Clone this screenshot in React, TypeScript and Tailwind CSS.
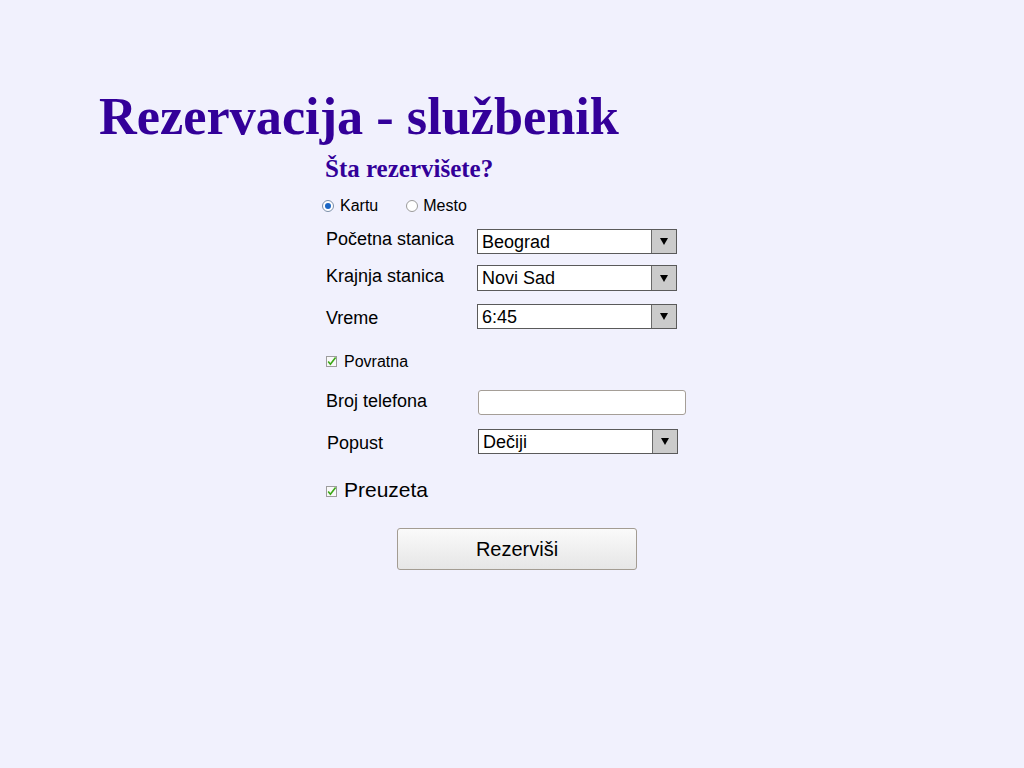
import React from 'react';

const sans = { fontFamily: '"Liberation Sans", Arial, sans-serif' };

function Radio({ checked }: { checked?: boolean }) {
  return (
    <svg width="12" height="12" viewBox="0 0 12 12" className="shrink-0">
      <circle cx="6" cy="6" r="5.5" fill="#ffffff" stroke={checked ? '#7a8ea8' : '#9a9a9a'} />
      {checked && <circle cx="6" cy="6" r="3" fill="#1c66c4" />}
    </svg>
  );
}

function Check() {
  return (
    <svg width="11" height="11" viewBox="0 0 11 11" className="shrink-0">
      <rect x="0.5" y="0.5" width="10" height="10" fill="#f8f8f8" stroke="#9c9c9c" />
      <path d="M2.2 5.6 L4.4 8.2 L9.6 1.6" fill="none" stroke="#3aa815" strokeWidth="1.6" />
    </svg>
  );
}

function Select({ value, h = 'h-[25px]' }: { value: string; h?: string }) {
  return (
    <div className={`flex w-[200px] ${h} border border-[#5a5a5a] bg-white`}>
      <div className="flex-1 flex items-center pl-[4px] text-[18px] leading-[22px] text-black">{value}</div>
      <div className="w-[25px] flex items-center justify-center bg-[#cbcbcb] border-l border-[#6a6a6a]">
        <svg width="8" height="7" viewBox="0 0 8 7">
          <path d="M0 0 L8 0 L4 7 Z" fill="#000" />
        </svg>
      </div>
    </div>
  );
}

export default function App() {
  return (
    <div className="min-h-[768px] w-full bg-[#f1f1fd] overflow-hidden">
      <h1
        className="ml-[99px] pt-[90px] text-[52.3px] leading-none font-bold text-[#330099]"
        style={{ fontFamily: '"Liberation Serif", "Times New Roman", serif' }}
      >
        Rezervacija - službenik
      </h1>

      <h2
        className="ml-[325px] mt-[14px] text-[25px] leading-none font-bold text-[#330099]"
        style={{ fontFamily: '"Liberation Serif", "Times New Roman", serif' }}
      >
        Šta rezervišete?
      </h2>

      <div className="ml-[322px] mt-[15px] text-black" style={sans}>
        {/* radios */}
        <div className="flex items-center h-[20px] text-[16px] leading-[20px]">
          <Radio checked />
          <span className="ml-[6px]">Kartu</span>
          <span className="ml-[28px]"><Radio /></span>
          <span className="ml-[5px]">Mesto</span>
        </div>

        {/* Početna */}
        <div className="flex items-start mt-[13px]">
          <div className="w-[155px] pl-[4px] -mt-px text-[18px] leading-[22px]">Početna stanica</div>
          <Select value="Beograd" />
        </div>

        {/* Krajnja */}
        <div className="flex items-start mt-[11px]">
          <div className="w-[155px] pl-[4px] text-[18px] leading-[22px]">Krajnja stanica</div>
          <Select value="Novi Sad" h="h-[26px]" />
        </div>

        {/* Vreme */}
        <div className="flex items-start mt-[13px]">
          <div className="w-[155px] pl-[4px] mt-[3px] text-[18px] leading-[22px]">Vreme</div>
          <Select value="6:45" />
        </div>

        {/* Povratna */}
        <div className="flex items-baseline mt-[23px] pl-[4px] h-[20px] text-[16px] leading-[20px]">
          <Check />
          <span className="ml-[7px]">Povratna</span>
        </div>

        {/* Broj telefona */}
        <div className="flex items-start mt-[18px]">
          <div className="w-[156px] pl-[4px] text-[18px] leading-[22px]">Broj telefona</div>
          <div className="w-[208px] h-[25px] bg-white border border-[#a59e97] rounded-[3px]" />
        </div>

        {/* Popust */}
        <div className="flex items-start mt-[14px]">
          <div className="w-[156px] pl-[5px] mt-[3px] text-[18px] leading-[22px]">Popust</div>
          <Select value="Dečiji" />
        </div>

        {/* Preuzeta */}
        <div className="flex items-baseline mt-[24px] pl-[4px] h-[24px] text-[21px] leading-[24px]">
          <Check />
          <span className="ml-[7px]">Preuzeta</span>
        </div>

        {/* button */}
        <button
          className="ml-[75px] mt-[26px] w-[240px] h-[42px] rounded-[3px] border border-[#a39c92] bg-gradient-to-b from-[#fafafa] to-[#e6e6e6] text-[20px] text-black"
          style={sans}
        >
          Rezerviši
        </button>
      </div>
    </div>
  );
}
